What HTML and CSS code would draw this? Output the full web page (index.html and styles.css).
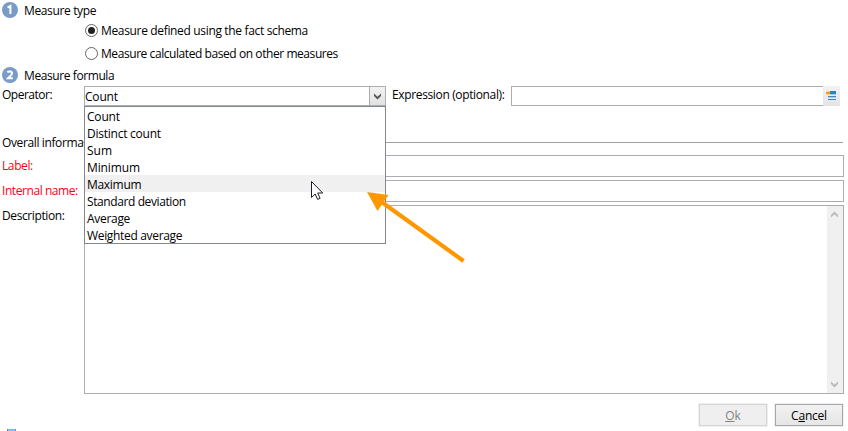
FILE: index.html
```html
<!DOCTYPE html>
<html lang="en">
<head>
<meta charset="utf-8">
<title>Measure</title>
<link rel="stylesheet" href="styles.css">
</head>
<body>
<main class="form">
  <div class="step"><span class="num"><svg width="16" height="16" viewBox="0 0 16 16"><path d="M5.500 5.600 8.400 4v8" /></svg></span><span class="t-type">Measure type</span></div>
  <div class="option"><span class="radio on"></span><span class="t-fact">Measure defined using the fact schema</span></div>
  <div class="option second"><span class="radio"></span><span class="t-calc">Measure calculated based on other measures</span></div>
  <div class="step two"><span class="num"><svg width="16" height="16" viewBox="0 0 16 16"><path d="M5.300 5.300C6.800 4.100 10.200 4.200 10 6.500 9.900 8.200 7.200 9.500 5.800 11.300H10.800" /></svg></span><span class="t-formula">Measure formula</span></div>

  <div class="row operator">
    <span class="label t-op">Operator:</span>
    <div class="combo">
      <span class="value t-count">Count</span>
      <span class="drop"><svg width="15" height="18" viewBox="0 0 15 18"><path d="M4 6.500v2.500l3.500 3.500L11 9V6.500L7.500 9.800z" fill="#555"/></svg></span>
      <ul class="menu">
        <li class="t-count">Count</li>
        <li class="t-distinct">Distinct count</li>
        <li class="t-sum">Sum</li>
        <li class="t-min">Minimum</li>
        <li class="active t-max">Maximum</li>
        <li class="t-std">Standard deviation</li>
        <li class="t-avg">Average</li>
        <li class="t-wavg">Weighted average</li>
      </ul>
    </div>
    <span class="expr t-expr">Expression (optional):</span>
    <span class="input expr-input"></span>
    <span class="edit"><svg width="17" height="20" viewBox="0 0 17 20" shape-rendering="crispEdges"><path d="M7 5h6v3H7z" fill="#2f80cc"/><path d="M5 10h8v1H5zM5 13h8v1H5z" fill="#3c86c8"/><path d="M5 11h8v1H5z" fill="#a9d3f5"/><path d="M7 8h6v1H7z" fill="#9ccbf0"/><path d="M4 5h3v4H4z" fill="#ffd27a"/><path d="M3 6h4v2H3z" fill="#f59a13"/></svg></span>
  </div>

  <div class="section"><span class="t-overall">Overall informa</span><i></i></div>
  <div class="row field"><span class="label required t-label">Label:</span><span class="input"></span></div>
  <div class="row field"><span class="label required t-internal">Internal name:</span><span class="input"></span></div>
  <div class="row area"><span class="label t-desc">Description:</span>
    <div class="input textarea"><div class="scroll">
      <svg width="16" height="18" viewBox="0 0 16 18"><path d="M4 11.500V9l3.500-3.500L11 9v2.500L7.500 8.200z" fill="#b8b8b8"/></svg>
      <svg width="16" height="18" viewBox="0 0 16 18"><path d="M4 6.500v2.500l3.500 3.500L11 9V6.500L7.500 9.800z" fill="#b8b8b8"/></svg>
    </div></div>
  </div>
  <div class="actions"><span class="btn disabled"><span><u>O</u>k</span></span><span class="btn"><span class="t-cancel">C<u>a</u>ncel</span></span></div>
  <div class="status"></div>
</main>
<svg class="cursor" width="14" height="21" viewBox="0 0 14 21"><path d="M1.500 1.500v16l3.700-3.500 2.400 5.400 2.500-1.100L7.700 13h5z" fill="#fff" stroke="#1b1b2b" stroke-width="1"/></svg>
<svg class="arrow" width="100" height="75" viewBox="0 0 100 75"><path d="M0 0 21.500 3 10.500 19z" fill="#ff9800"/><path d="M14 9.500 96.500 69" stroke="#ff9800" stroke-width="4.200"/></svg>
</body>
</html>
```
FILE: styles.css
```css
* { box-sizing: border-box; }
html, body { margin: 0; height: 431px; overflow: hidden; background: #fff; }
body { position: relative; font: 12px/17px "Open Sans", "Noto Sans", sans-serif; color: #000; }
span { white-space: nowrap; }
svg { display: block; }
.form { width: 848px; height: 431px; display: flex; flex-direction: column; }
.step { display: flex; align-items: center; height: 20px; padding-left: 2px; gap: 6px; }
.num { width: 16px; height: 16px; border-radius: 50%; background: #7a9ac8; }
.num path { fill: none; stroke: #fff; stroke-width: 2; }
.option { display: flex; align-items: center; height: 21px; padding-left: 85px; gap: 3px; }
.second { height: 24px; }
.radio { width: 13px; height: 13px; border: 1px solid #666; border-radius: 50%; background: #fff; display: grid; place-items: center; }
.radio.on::before { content: ""; width: 7px; height: 7px; border-radius: 50%; background: #222; }
.row { display: flex; padding-left: 2px; width: 844px; }
.label { width: 82px; flex: none; padding-top: 2px; }
.required { color: #ff0010; }
.operator { margin-top: 1px; height: 20px; }
.operator .label, .expr { padding-top: 0; line-height: 18px; }
.combo { position: relative; display: flex; width: 302px; height: 20px; border: 1px solid #abadb3; justify-content: space-between; }
.value { line-height: 18px; padding-top: 1px; }
.drop { width: 16px; border-left: 1px solid #abadb3; background: linear-gradient(#f2f2f2, #e2e2e2); }
.menu { position: absolute; z-index: 2; left: -1px; top: 19px; width: 302px; height: 138px; margin: 0; padding: 0; list-style: none; background: #fff; border: 1px solid #828790; }
.menu li { height: 17px; line-height: 17px; padding: 1px 0 0 2px; }
.menu .active { background: #f0f0f0; }
.expr { width: 119px; margin-left: 6px; }
.input { border: 1px solid #abadb3; background: #fff; flex: 1; }
.expr-input { border-right: 0; flex: 0 0 312px; }
.edit { width: 17px; background: linear-gradient(#f2f2f2, #e3e3e3); }
.section { display: flex; align-items: center; margin-top: 27px; height: 17px; width: 843px; padding-left: 2px; }
.section span { padding-top: 1px; }
.section i { flex: 1; height: 1px; background: #a0a0a0; margin-top: 1px; }
.field { height: 22px; margin-top: 3px; }
.section + .field { margin-top: 5px; }
.area { height: 189px; margin-top: 3px; }
.textarea { display: flex; justify-content: flex-end; }
.scroll { width: 16px; background: #f0f0f0; display: flex; flex-direction: column; justify-content: space-between; }
.actions { display: flex; justify-content: flex-end; gap: 6px; width: 844px; margin-top: 9px; }
.btn { width: 70px; height: 24px; display: flex; justify-content: center; align-items: center; border: 1px solid #f0f0f0; outline: 1px solid #a8a8a8; outline-offset: -2px; background: linear-gradient(#f2f2f2, #e5e5e5); }
.disabled { background: #efefef; color: #838383; outline-color: #d5d5d5; }
.status { width: 9px; height: 2px; margin: 2px 0 0 7px; background: #7fbfff; border-left: 1px solid #5585b5; border-right: 1px solid #5c92c5; }
.cursor, .arrow { position: absolute; z-index: 3; }
.cursor { left: 310px; top: 180px; }
.arrow { left: 367px; top: 192px; }

.t-type { letter-spacing: -.36px; }
.t-fact { letter-spacing: -.34px; }
.t-calc { letter-spacing: -.43px; }
.t-formula { letter-spacing: -.41px; }
.t-op { letter-spacing: -.5px; }
.t-count { letter-spacing: -.2px; }
.t-distinct { letter-spacing: -.24px; }
.t-min { letter-spacing: -.12px; }
.t-max { letter-spacing: -.3px; }
.t-std { letter-spacing: -.4px; }
.t-avg { letter-spacing: -.3px; }
.t-wavg { letter-spacing: -.33px; }
.t-expr { letter-spacing: -.36px; }
.t-overall { letter-spacing: -.38px; }
.t-label { letter-spacing: -.4px; }
.t-internal { letter-spacing: -.43px; }
.t-desc { letter-spacing: -.4px; }
.t-cancel { letter-spacing: -.2px; }
```
